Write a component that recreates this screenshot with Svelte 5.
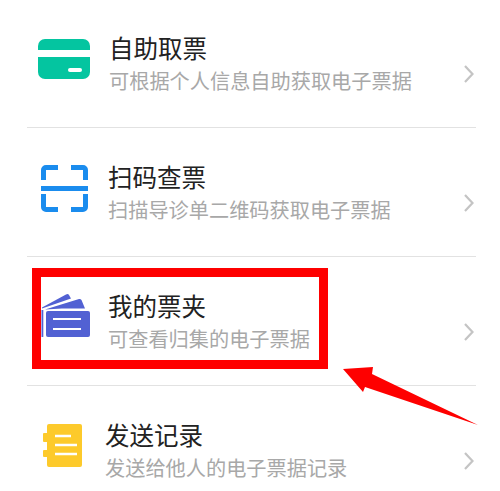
<script>
  const rows = [
    { id: 'card', title: '自助取票', sub: '可根据个人信息自助获取电子票据' },
    { id: 'scan', title: '扫码查票', sub: '扫描导诊单二维码获取电子票据' },
    { id: 'wallet', title: '我的票夹', sub: '可查看归集的电子票据' },
    { id: 'record', title: '发送记录', sub: '发送给他人的电子票据记录' }
  ];
</script>

<div class="page">
  <ul class="list">
    {#each rows as row}
      <li class="row row-{row.id}">
        <span class="icon">
          {#if row.id === 'card'}
            <svg width="52" height="40" viewBox="0 0 52 40">
              <path fill="#04c5a0" d="M0 11V7a7 7 0 0 1 7-7h38a7 7 0 0 1 7 7v4z" />
              <path fill="#04c5a0" d="M0 18h52v15a7 7 0 0 1-7 7H7a7 7 0 0 1-7-7z" />
              <rect x="30" y="29" width="14" height="4" rx="2" fill="#fff" />
            </svg>
          {:else if row.id === 'scan'}
            <svg width="47" height="47" viewBox="0 0 47 47" fill="none" stroke="#1a8cee" stroke-width="5">
              <path d="M17 2.500H5a2.500 2.500 0 0 0-2.500 2.500V15" />
              <path d="M30 2.500h12a2.500 2.500 0 0 1 2.500 2.500V15" />
              <path d="M2.500 29v13a2.500 2.500 0 0 0 2.500 2.500h12" />
              <path d="M44.500 29v13a2.500 2.500 0 0 1-2.500 2.500H30" />
              <path d="M0 23.500h47" />
            </svg>
          {:else if row.id === 'wallet'}
            <svg width="49" height="43" viewBox="0 0 49 43">
              <path fill="#5261d3" d="M1 13.500 25 .5q2-1 3 .5l2 3.500L1 14.500z" />
              <path fill="#5261d3" d="M4 15.500 38 5q1.500-.5 2.500 1L44 14.500H21z" />
              <rect x="5" y="17" width="44" height="26" rx="2" fill="#5261d3" />
              <rect x="0.500" y="16" width="1.800" height="27" fill="#5261d3" />
              <path stroke="#fff" stroke-width="2" d="M12 25h28M12 35h28" />
            </svg>
          {:else}
            <svg width="40" height="44" viewBox="0 0 40 44">
              <path fill="#fdca2b" d="M5 3a2 2 0 0 1 2-2h31a2 2 0 0 1 2 2v39a2 2 0 0 1-2 2H7a2 2 0 0 1-2-2v-8H2a1 1 0 0 1-1-1v-5a1 1 0 0 1 1-1h3v-8H2a1 1 0 0 1-1-1v-7a1 1 0 0 1 1-1h3z" />
              <path stroke="#fff" stroke-width="2.500" d="M13 13h16M13 22h22M13 31h22" />
            </svg>
          {/if}
        </span>
        <div class="text">
          <div class="title">{row.title}</div>
          <div class="sub">{row.sub}</div>
        </div>
        <svg class="chevron" width="10" height="18" viewBox="0 0 10 18" fill="none" stroke="#c4c4c4" stroke-width="2.200">
          <path d="M1 1l7.500 8L1 17" />
        </svg>
      </li>
    {/each}
  </ul>

  <div class="highlight"></div>
  <svg class="arrow" width="140" height="60" viewBox="340 367 140 60">
    <path fill="#fe0000" d="M343 369 373 367 372 374 478 425 365 387 363 392z" />
  </svg>
</div>

<style>
  :global(body) {
    margin: 0;
    background: #fff;
  }

  .page {
    position: relative;
    width: 500px;
    height: 491px;
    overflow: hidden;
    font-family: "Noto Sans CJK SC", "Noto Sans", sans-serif;
  }

  .list {
    list-style: none;
    margin: 0 24px 0 27px;
    padding: 0;
  }

  .row {
    box-sizing: border-box;
    height: 129px;
    display: flex;
    align-items: center;
    border-bottom: 1.500px solid #e2e2e2;
    padding-right: 2px;
  }

  .row:first-child {
    height: 127.500px;
  }

  .row:last-child {
    border-bottom: none;
  }

  .icon {
    display: flex;
    flex: none;
  }

  .row-card .icon { padding: 0 0 8px 11px; width: 71px; }
  .row-scan .icon { padding: 0 0 6px 14px; width: 67px; }
  .row-wallet .icon { padding: 0 0 11px 14px; width: 67px; }
  .row-record .icon { padding: 0 0 10px 15px; width: 63px; }

  .text {
    flex: 1;
    padding-top: 1px;
  }

  .row-card .text {
    padding-top: 0;
  }

  .title {
    font-size: 24.500px;
    line-height: 32px;
    color: #222;
  }

  .sub {
    font-size: 20.200px;
    line-height: 28px;
    margin-top: 3px;
    color: #a8a8a8;
  }

  .chevron {
    flex: none;
    margin-top: 22px;
  }

  .highlight {
    position: absolute;
    left: 32px;
    top: 268px;
    box-sizing: border-box;
    width: 296px;
    height: 101px;
    border: 9px solid #fe0000;
  }

  .arrow {
    position: absolute;
    left: 340px;
    top: 367px;
  }
</style>
